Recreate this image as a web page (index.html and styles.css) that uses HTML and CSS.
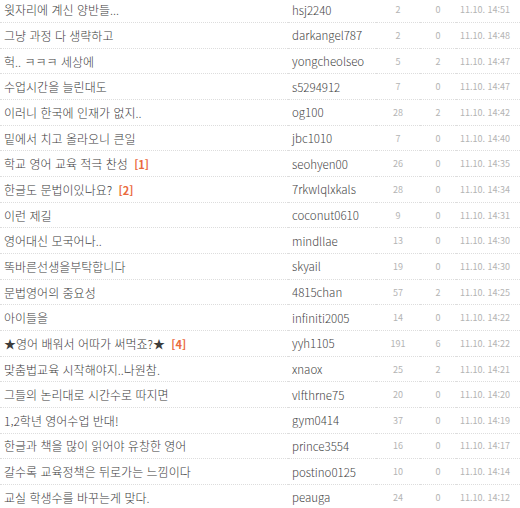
FILE: index.html
```html
<!DOCTYPE html>
<html lang="ko">
<head>
  <meta charset="UTF-8">
  <title>게시판</title>
  <link rel="stylesheet" href="styles.css">
</head>
<body>
  <table class="board">
    <colgroup>
      <col class="c-title"><col class="c-author"><col class="c-hit"><col class="c-reply"><col class="c-date">
    </colgroup>
    <tbody>
      <tr><td class="title">윗자리에 계신 양반들...</td><td class="author">hsj2240</td><td class="num">2</td><td class="num">0</td><td class="date">11.10. 14:51</td></tr>
      <tr><td class="title">그냥 과정 다 생략하고</td><td class="author">darkangel787</td><td class="num">2</td><td class="num">0</td><td class="date">11.10. 14:48</td></tr>
      <tr><td class="title">헉.. ㅋㅋㅋ 세상에</td><td class="author">yongcheolseo</td><td class="num">5</td><td class="num">2</td><td class="date">11.10. 14:47</td></tr>
      <tr><td class="title">수업시간을 늘린대도</td><td class="author">s5294912</td><td class="num">7</td><td class="num">0</td><td class="date">11.10. 14:47</td></tr>
      <tr><td class="title">이러니 한국에 인재가 없지..</td><td class="author">og100</td><td class="num">28</td><td class="num">2</td><td class="date">11.10. 14:42</td></tr>
      <tr><td class="title">밑에서 치고 올라오니 큰일</td><td class="author">jbc1010</td><td class="num">7</td><td class="num">0</td><td class="date">11.10. 14:40</td></tr>
      <tr><td class="title">학교 영어 교육 적극 찬성 <span class="cmt">[1]</span></td><td class="author">seohyen00</td><td class="num">26</td><td class="num">0</td><td class="date">11.10. 14:35</td></tr>
      <tr><td class="title">한글도 문법이있나요? <span class="cmt">[2]</span></td><td class="author">7rkwlqlxkals</td><td class="num">28</td><td class="num">0</td><td class="date">11.10. 14:34</td></tr>
      <tr><td class="title">이런 제길</td><td class="author">coconut0610</td><td class="num">9</td><td class="num">0</td><td class="date">11.10. 14:31</td></tr>
      <tr><td class="title">영어대신 모국어나..</td><td class="author">mindllae</td><td class="num">13</td><td class="num">0</td><td class="date">11.10. 14:30</td></tr>
      <tr><td class="title">똑바른선생을부탁합니다</td><td class="author">skyail</td><td class="num">19</td><td class="num">0</td><td class="date">11.10. 14:30</td></tr>
      <tr><td class="title">문법영어의 중요성</td><td class="author">4815chan</td><td class="num">57</td><td class="num">2</td><td class="date">11.10. 14:25</td></tr>
      <tr><td class="title">아이들을</td><td class="author">infiniti2005</td><td class="num">14</td><td class="num">0</td><td class="date">11.10. 14:22</td></tr>
      <tr><td class="title">★영어 배워서 어따가 써먹죠?★ <span class="cmt">[4]</span></td><td class="author">yyh1105</td><td class="num">191</td><td class="num">6</td><td class="date">11.10. 14:22</td></tr>
      <tr><td class="title">맞춤법교육 시작해야지..나원참.</td><td class="author">xnaox</td><td class="num">25</td><td class="num">2</td><td class="date">11.10. 14:21</td></tr>
      <tr><td class="title">그들의 논리대로 시간수로 따지면</td><td class="author">vlfthrne75</td><td class="num">20</td><td class="num">0</td><td class="date">11.10. 14:20</td></tr>
      <tr><td class="title">1,2학년 영어수업 반대!</td><td class="author">gym0414</td><td class="num">37</td><td class="num">0</td><td class="date">11.10. 14:19</td></tr>
      <tr><td class="title">한글과 책을 많이 읽어야 유창한 영어</td><td class="author">prince3554</td><td class="num">16</td><td class="num">0</td><td class="date">11.10. 14:17</td></tr>
      <tr><td class="title">갈수록 교육정책은 뒤로가는 느낌이다</td><td class="author">postino0125</td><td class="num">10</td><td class="num">0</td><td class="date">11.10. 14:14</td></tr>
      <tr><td class="title">교실 학생수를 바꾸는게 맞다.</td><td class="author">peauga</td><td class="num">24</td><td class="num">0</td><td class="date">11.10. 14:12</td></tr>
    </tbody>
  </table>
</body>
</html>
```

FILE: styles.css
```css
* { box-sizing: border-box; }
body {
  margin: 0;
  background: #fff;
  font-family: "Noto Sans CJK KR", "Noto Sans", sans-serif;
  color: #333;
}
.board {
  width: 520px;
  margin-top: -3px;
  border-collapse: collapse;
  table-layout: fixed;
}
.c-title { width: 288px; }
.c-author { width: 88px; }
.c-hit { width: 44px; }
.c-reply { width: 36px; }
.c-date { width: 64px; }
.board td {
  height: 25.67px;
  padding: 0;
  border-bottom: 1px dotted #ddd;
  white-space: nowrap;
  overflow: hidden;
}
.board .title {
  padding-left: 4px;
  font-size: 12px;
  font-weight: 300;
  color: #3c3c3c;
}
.cmt {
  margin-left: 3px;
  color: #ea6a3c;
  font-size: 11px;
  font-weight: bold;
}
.board .author {
  padding-left: 4px;
  font-size: 11.5px;
  font-weight: 300;
  color: #444;
}
.board .num {
  text-align: center;
  font-size: 9px;
  color: #b4b4b4;
}
.board .date {
  text-align: right;
  padding-right: 10px;
  font-size: 9px;
  color: #b4b4b4;
}
```
